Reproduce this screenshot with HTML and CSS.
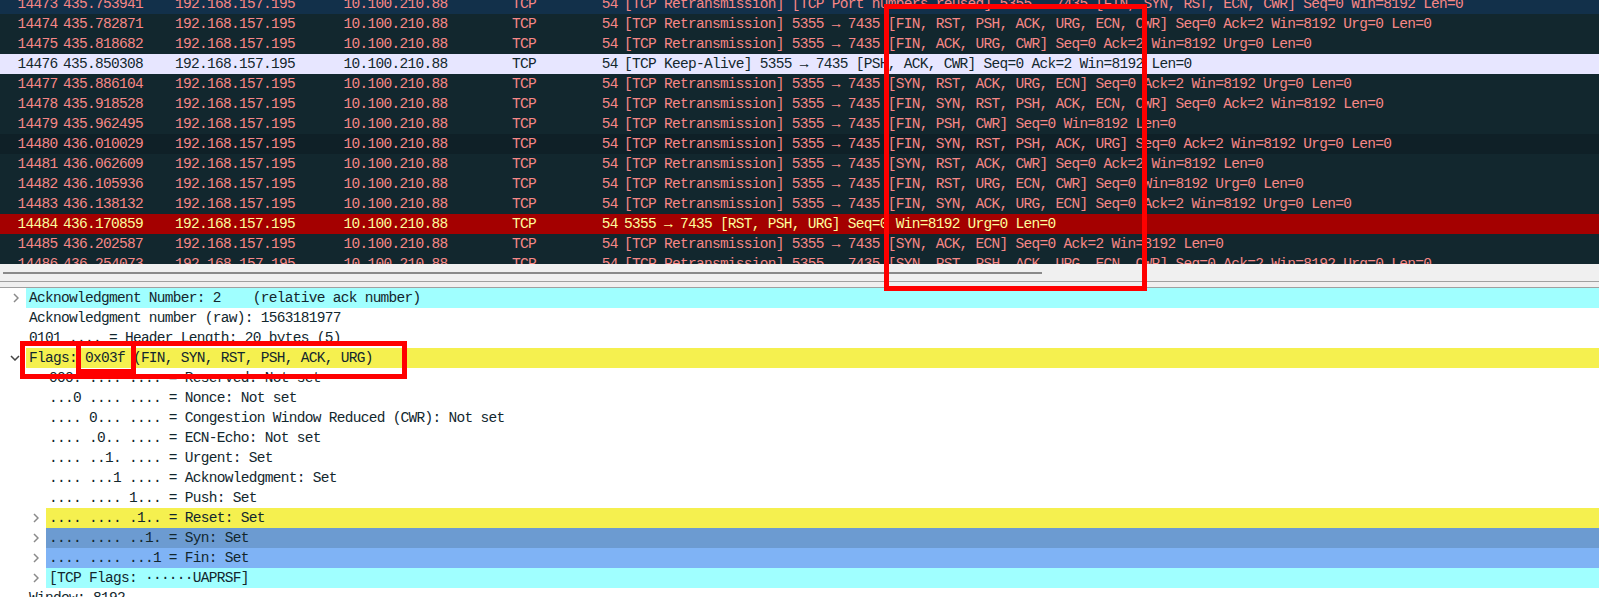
FILE: index.html
```html
<!DOCTYPE html>
<html lang="en">
<head>
<meta charset="utf-8">
<title>Wireshark capture</title>
<link rel="stylesheet" href="styles.css">
</head>
<body>
<main class="app">
  <section class="packets">
    <div class="pkt bad port"><span class="no">14473</span><span class="time">435.753941</span><span class="addr">192.168.157.195</span><span class="addr">10.100.210.88</span><span class="proto">TCP</span><span class="len">54</span><span class="info">[TCP Retransmission] [TCP Port numbers reused] 5355 → 7435 [FIN, SYN, RST, ECN, CWR] Seq=0 Win=8192 Len=0</span></div>
    <div class="pkt bad"><span class="no">14474</span><span class="time">435.782871</span><span class="addr">192.168.157.195</span><span class="addr">10.100.210.88</span><span class="proto">TCP</span><span class="len">54</span><span class="info">[TCP Retransmission] 5355 → 7435 [FIN, RST, PSH, ACK, URG, ECN, CWR] Seq=0 Ack=2 Win=8192 Urg=0 Len=0</span></div>
    <div class="pkt bad"><span class="no">14475</span><span class="time">435.818682</span><span class="addr">192.168.157.195</span><span class="addr">10.100.210.88</span><span class="proto">TCP</span><span class="len">54</span><span class="info">[TCP Retransmission] 5355 → 7435 [FIN, ACK, URG, CWR] Seq=0 Ack=2 Win=8192 Urg=0 Len=0</span></div>
    <div class="pkt keep"><span class="no">14476</span><span class="time">435.850308</span><span class="addr">192.168.157.195</span><span class="addr">10.100.210.88</span><span class="proto">TCP</span><span class="len">54</span><span class="info">[TCP Keep-Alive] 5355 → 7435 [PSH, ACK, CWR] Seq=0 Ack=2 Win=8192 Len=0</span></div>
    <div class="pkt bad"><span class="no">14477</span><span class="time">435.886104</span><span class="addr">192.168.157.195</span><span class="addr">10.100.210.88</span><span class="proto">TCP</span><span class="len">54</span><span class="info">[TCP Retransmission] 5355 → 7435 [SYN, RST, ACK, URG, ECN] Seq=0 Ack=2 Win=8192 Urg=0 Len=0</span></div>
    <div class="pkt bad"><span class="no">14478</span><span class="time">435.918528</span><span class="addr">192.168.157.195</span><span class="addr">10.100.210.88</span><span class="proto">TCP</span><span class="len">54</span><span class="info">[TCP Retransmission] 5355 → 7435 [FIN, SYN, RST, PSH, ACK, ECN, CWR] Seq=0 Ack=2 Win=8192 Len=0</span></div>
    <div class="pkt bad"><span class="no">14479</span><span class="time">435.962495</span><span class="addr">192.168.157.195</span><span class="addr">10.100.210.88</span><span class="proto">TCP</span><span class="len">54</span><span class="info">[TCP Retransmission] 5355 → 7435 [FIN, PSH, CWR] Seq=0 Win=8192 Len=0</span></div>
    <div class="pkt bad marked"><span class="no">14480</span><span class="time">436.010029</span><span class="addr">192.168.157.195</span><span class="addr">10.100.210.88</span><span class="proto">TCP</span><span class="len">54</span><span class="info">[TCP Retransmission] 5355 → 7435 [FIN, SYN, RST, PSH, ACK, URG] Seq=0 Ack=2 Win=8192 Urg=0 Len=0</span></div>
    <div class="pkt bad"><span class="no">14481</span><span class="time">436.062609</span><span class="addr">192.168.157.195</span><span class="addr">10.100.210.88</span><span class="proto">TCP</span><span class="len">54</span><span class="info">[TCP Retransmission] 5355 → 7435 [SYN, RST, ACK, CWR] Seq=0 Ack=2 Win=8192 Len=0</span></div>
    <div class="pkt bad"><span class="no">14482</span><span class="time">436.105936</span><span class="addr">192.168.157.195</span><span class="addr">10.100.210.88</span><span class="proto">TCP</span><span class="len">54</span><span class="info">[TCP Retransmission] 5355 → 7435 [FIN, RST, URG, ECN, CWR] Seq=0 Win=8192 Urg=0 Len=0</span></div>
    <div class="pkt bad"><span class="no">14483</span><span class="time">436.138132</span><span class="addr">192.168.157.195</span><span class="addr">10.100.210.88</span><span class="proto">TCP</span><span class="len">54</span><span class="info">[TCP Retransmission] 5355 → 7435 [FIN, SYN, ACK, URG, ECN] Seq=0 Ack=2 Win=8192 Urg=0 Len=0</span></div>
    <div class="pkt rst"><span class="no">14484</span><span class="time">436.170859</span><span class="addr">192.168.157.195</span><span class="addr">10.100.210.88</span><span class="proto">TCP</span><span class="len">54</span><span class="info">5355 → 7435 [RST, PSH, URG] Seq=0 Win=8192 Urg=0 Len=0</span></div>
    <div class="pkt bad"><span class="no">14485</span><span class="time">436.202587</span><span class="addr">192.168.157.195</span><span class="addr">10.100.210.88</span><span class="proto">TCP</span><span class="len">54</span><span class="info">[TCP Retransmission] 5355 → 7435 [SYN, ACK, ECN] Seq=0 Ack=2 Win=8192 Len=0</span></div>
    <div class="pkt bad"><span class="no">14486</span><span class="time">436.254073</span><span class="addr">192.168.157.195</span><span class="addr">10.100.210.88</span><span class="proto">TCP</span><span class="len">54</span><span class="info">[TCP Retransmission] 5355 → 7435 [SYN, RST, PSH, ACK, URG, ECN, CWR] Seq=0 Ack=2 Win=8192 Urg=0 Len=0</span></div>
  </section>

  <div class="hscroll"><div class="thumb"></div></div>
  <div class="splitter"></div>

  <section class="details">
    <div class="node top"><svg class="chev" viewBox="0 0 6 10"><path d="M1 1l4 4-4 4"/></svg><div class="label cyan">Acknowledgment Number: 2    (relative ack number)</div></div>
    <div class="node top"><span class="gap"></span><div class="label">Acknowledgment number (raw): 1563181977</div></div>
    <div class="node top"><span class="gap"></span><div class="label">0101 .... = Header Length: 20 bytes (5)</div></div>
    <div class="node top"><svg class="chev open" viewBox="0 0 10 6"><path d="M1 1l4 4 4-4"/></svg><div class="label yellow">Flags: 0x03f (FIN, SYN, RST, PSH, ACK, URG)</div></div>
    <div class="node sub"><span class="gap"></span><div class="label">000. .... .... = Reserved: Not set</div></div>
    <div class="node sub"><span class="gap"></span><div class="label">...0 .... .... = Nonce: Not set</div></div>
    <div class="node sub"><span class="gap"></span><div class="label">.... 0... .... = Congestion Window Reduced (CWR): Not set</div></div>
    <div class="node sub"><span class="gap"></span><div class="label">.... .0.. .... = ECN-Echo: Not set</div></div>
    <div class="node sub"><span class="gap"></span><div class="label">.... ..1. .... = Urgent: Set</div></div>
    <div class="node sub"><span class="gap"></span><div class="label">.... ...1 .... = Acknowledgment: Set</div></div>
    <div class="node sub"><span class="gap"></span><div class="label">.... .... 1... = Push: Set</div></div>
    <div class="node sub"><svg class="chev" viewBox="0 0 6 10"><path d="M1 1l4 4-4 4"/></svg><div class="label yellow">.... .... .1.. = Reset: Set</div></div>
    <div class="node sub"><svg class="chev" viewBox="0 0 6 10"><path d="M1 1l4 4-4 4"/></svg><div class="label steel">.... .... ..1. = Syn: Set</div></div>
    <div class="node sub"><svg class="chev" viewBox="0 0 6 10"><path d="M1 1l4 4-4 4"/></svg><div class="label sky">.... .... ...1 = Fin: Set</div></div>
    <div class="node sub"><svg class="chev" viewBox="0 0 6 10"><path d="M1 1l4 4-4 4"/></svg><div class="label cyan">[TCP Flags: ······UAPRSF]</div></div>
    <div class="node top"><span class="gap"></span><div class="label">Window: 8192</div></div>
  </section>

  <div class="mark mark-list"></div>
  <div class="mark mark-flags"></div>
  <div class="mark mark-value"></div>
</main>
</body>
</html>
```

FILE: styles.css
```css
* { box-sizing: border-box; }

html, body {
  margin: 0;
  height: 597px;
  overflow: hidden;
  background: #fff;
}

.app {
  position: relative;
  height: 597px;
  overflow: hidden;
  font-family: "Liberation Mono", "DejaVu Sans Mono", monospace;
  font-size: 14.5px;
  letter-spacing: -0.71px;
  line-height: 21px;
  color: #12272e;
}

.packets {
  height: 264px;
  overflow: hidden;
  background: #12272e;
}

.pkt {
  display: flex;
  height: 20px;
  padding-left: 17.5px;
  white-space: pre;
}

.pkt:first-child { margin-top: -6px; }

.bad { background: #12272e; color: #f78787; }
.port { background: #12304a; }
.marked { background: #0f2027; }
.keep { background: #e7e6ff; color: #12272e; }
.rst { background: #a40000; color: #fffc9c; }

.no { width: 45.5px; }
.time { width: 112px; }
.addr { width: 168.5px; }
.proto { width: 71.7px; }
.len { width: 34px; text-align: right; }
.info { padding-left: 6.3px; }

.hscroll {
  height: 17px;
  padding: 8px 0 0 3px;
  background: #f0f0f0;
}

.thumb {
  width: 1039px;
  height: 2px;
  background: #8a8a8a;
}

.splitter {
  height: 7px;
  background: #f0f0f0;
  border-top: 1px solid #a0a0a0;
  border-bottom: 1px solid #a0a0a0;
}

.details {
  background: #fff;
}

.node {
  display: flex;
  align-items: center;
  height: 20px;
  white-space: pre;
}

.top { padding-left: 13px; }
.sub { padding-left: 33px; }

.gap {
  flex: none;
  width: 13px;
  height: 10px;
}

.chev {
  flex: none;
  fill: none;
  stroke: #8a8a8a;
  stroke-width: 1.5;
  width: 6px;
  height: 10px;
  margin-right: 7px;
}

.chev.open {
  stroke: #444;
  width: 10px;
  height: 6px;
  margin-left: -3px;
  margin-right: 6px;
}

.label {
  flex: 1;
  height: 20px;
  padding-left: 3px;
}

.cyan { background: #a0ffff; }
.yellow { background: #f5f04f; }
.steel { background: #6c9bd1; }
.sky { background: #7fb3f5; }

.mark {
  position: absolute;
  border: 5px solid #ff0000;
}

.mark-list { left: 884px; top: 4px; width: 263px; height: 287px; }
.mark-flags { left: 20px; top: 341px; width: 387px; height: 38px; }
.mark-value { left: 76px; top: 341px; width: 60px; height: 33px; }
```
